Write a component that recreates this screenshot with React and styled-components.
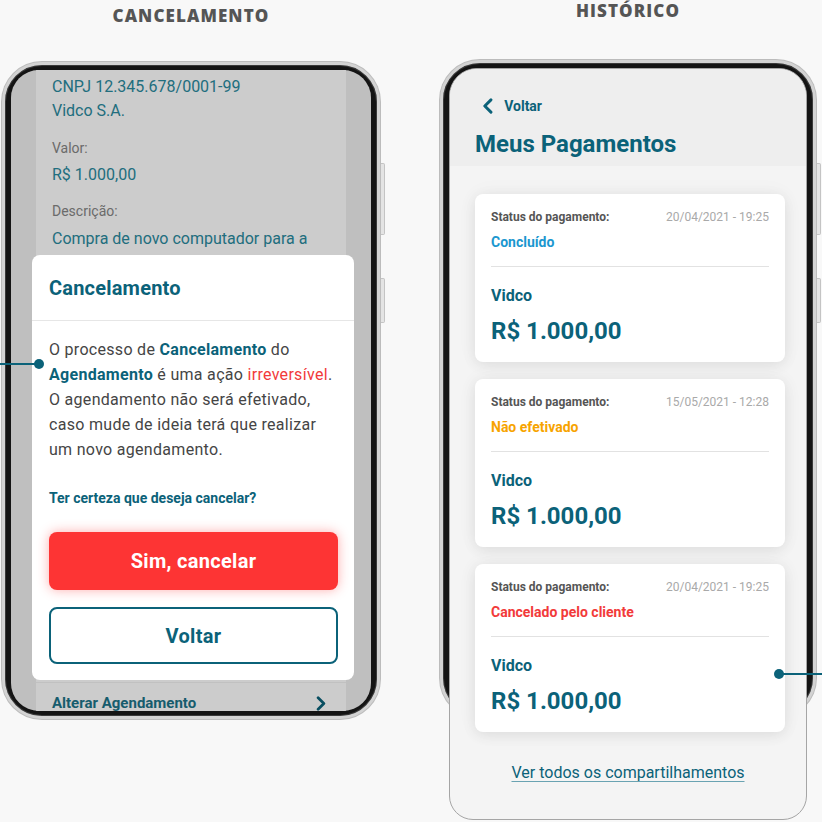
import React from 'react'
import styled, { createGlobalStyle } from 'styled-components'

const teal = '#0b6279'

const GlobalStyle = createGlobalStyle`
  body {
    margin: 0;
    background: #f8f8f8;
    font-family: Roboto, "Liberation Sans", sans-serif;
  }
`

const Page = styled.div`
  position: relative;
  width: 822px;
  height: 822px;
  overflow: hidden;
  box-sizing: border-box;
  padding-left: 2px;
  display: grid;
  grid-template-columns: 378px 376px;
  column-gap: 60px;
  align-items: start;
`
const Column = styled.div`
  display: flex;
  flex-direction: column;
  align-items: center;
`
const SectionTitle = styled.div`
  margin-top: ${p => p.top}px;
  margin-bottom: ${p => p.gap}px;
  font-family: "Open Sans", "DejaVu Sans", sans-serif;
  font-weight: 800;
  font-size: 17px;
  line-height: 22px;
  letter-spacing: 1.1px;
  color: #555;
`
const Frame = styled.div`
  position: relative;
  box-sizing: border-box;
  width: ${p => p.w}px;
  height: ${p => p.h}px;
  padding: 5px 6px;
  border: 3px solid #d3d3d3;
  border-radius: 40px;
  background: #141414;
  box-shadow: 0 0 0 1px #bcbcbc, inset 0 0 0 1px #3a3a3a;
  &::before, &::after {
    content: '';
    position: absolute;
    right: -8px;
    width: 3px;
    background: #e4e4e4;
    border: 1px solid #c4c4c4;
    border-left: none;
    border-radius: 0 2px 2px 0;
  }
  &::before { top: ${p => p.btnTop}px; height: 70px; }
  &::after { top: ${p => p.btnTop + 115}px; height: 43px; }
`
const Screen = styled.div`
  position: relative;
  box-sizing: border-box;
  height: ${p => p.h}px;
  border-radius: ${p => p.extended ? '28px 28px 24px 24px' : '28px'};
  border: ${p => p.extended ? '1px solid #a5a5a5' : 'none'};
  overflow: hidden;
  background: ${p => p.bg};
  display: flex;
  flex-direction: column;
`

/* ---------- left: cancel modal ---------- */

const DetailCard = styled.div`
  width: 310px;
  height: 653px;
  flex-shrink: 0;
  margin: 0 auto;
  box-sizing: border-box;
  padding: 5px 0 0;
  background: #fff;
  display: flex;
  flex-direction: column;
`
const DetailValue = styled.div`
  padding: 0 16px;
  margin-top: ${p => p.mt || 0}px;
  font-size: 16px;
  line-height: 24px;
  color: #2a8a9e;
`
const DetailLabel = styled.div`
  padding: 0 16px;
  margin-top: ${p => p.mt}px;
  font-size: 14px;
  line-height: 20px;
  color: #868686;
`
const ActionRow = styled.div`
  margin-top: auto;
  height: 40px;
  padding: 0 20px 0 16px;
  border-top: 1px solid #f2f2f2;
  display: flex;
  align-items: center;
  justify-content: space-between;
  font-size: 15px;
  font-weight: 700;
  color: #1c7489;
`
const Dim = styled.div`
  position: absolute;
  inset: 0;
  background: rgba(0, 0, 0, 0.2);
`
const Modal = styled.div`
  position: absolute;
  top: 185px;
  left: 21px;
  width: 322px;
  background: #fff;
  border-radius: 8px;
  padding-bottom: 16px;
`
const ModalHeader = styled.div`
  height: 65px;
  padding: 0 17px;
  display: flex;
  align-items: center;
  border-bottom: 1px solid #e6e6e6;
  font-size: 20px;
  font-weight: 700;
  letter-spacing: 0.2px;
  color: ${teal};
`
const ModalBody = styled.div`
  padding: 16px 16px 0 17px;
`
const Paragraph = styled.p`
  margin: 0;
  font-size: 16px;
  line-height: 25px;
  letter-spacing: 0.3px;
  white-space: nowrap;
  color: #454545;
`
const Strong = styled.b`
  color: ${teal};
  font-weight: 700;
`
const Danger = styled.span`
  color: #f23a3a;
`
const Question = styled.div`
  margin-top: 26px;
  font-size: 14px;
  line-height: 20px;
  font-weight: 700;
  color: ${teal};
`
const Button = styled.button`
  display: block;
  box-sizing: border-box;
  width: 289px;
  height: ${p => p.primary ? 58 : 57}px;
  margin-top: ${p => p.primary ? 24 : 17}px;
  border-radius: 8px;
  border: ${p => p.primary ? 'none' : `2px solid ${teal}`};
  background: ${p => p.primary ? '#fd3434' : '#fff'};
  box-shadow: ${p => p.primary ? '0 0 12px rgba(253, 52, 52, 0.4)' : 'none'};
  color: ${p => p.primary ? '#fff' : teal};
  font-family: Roboto, "Liberation Sans", sans-serif;
  font-size: 20px;
  font-weight: 700;
  letter-spacing: 0.3px;
`

/* ---------- right: history ---------- */

const Header = styled.div`
  height: 97px;
  flex-shrink: 0;
  box-sizing: border-box;
  padding: 27px 25px 0;
  background: #eeeeee;
`
const BackLink = styled.div`
  height: 20px;
  display: flex;
  align-items: center;
  gap: 11px;
  padding-left: 7px;
  font-size: 14px;
  font-weight: 700;
  color: ${teal};
`
const PageTitle = styled.div`
  margin-top: 13px;
  font-size: 24px;
  line-height: 30px;
  font-weight: 700;
  color: ${teal};
`
const List = styled.div`
  padding: 28px 0 0 25px;
  display: flex;
  flex-direction: column;
  gap: 17px;
`
const Card = styled.div`
  width: 310px;
  height: 168px;
  box-sizing: border-box;
  padding: 14px 16px 0;
  background: #fff;
  border-radius: 8px;
  box-shadow: 0 3px 14px rgba(0, 0, 0, 0.08), 0 0 22px rgba(0, 0, 0, 0.04);
`
const CardTop = styled.div`
  display: flex;
  justify-content: space-between;
  font-size: 12px;
  line-height: 18px;
`
const CardLabel = styled.span`
  font-weight: 700;
  color: #555;
`
const CardDate = styled.span`
  color: #a9a9a9;
`
const Status = styled.div`
  margin-top: 6px;
  font-size: 14px;
  line-height: 20px;
  font-weight: 700;
  color: ${p => p.color};
  padding-bottom: 14px;
  border-bottom: 1px solid #e2e2e2;
`
const Payee = styled.div`
  margin-top: 18px;
  font-size: 16px;
  line-height: 22px;
  font-weight: 700;
  color: ${teal};
`
const Amount = styled.div`
  margin-top: 8px;
  font-size: 24px;
  line-height: 32px;
  font-weight: 700;
  color: ${teal};
`
const SeeAll = styled.a`
  display: block;
  margin-top: 31px;
  text-align: center;
  font-size: 16px;
  line-height: 20px;
  color: ${teal};
  text-decoration: underline;
  text-decoration-color: #6aa3b2;
  text-underline-offset: 3px;
`

/* ---------- annotation pins ---------- */

const Pin = styled.div`
  position: absolute;
  top: ${p => p.y - 1}px;
  left: ${p => p.x1}px;
  width: ${p => p.x2 - p.x1}px;
  height: 2px;
  background: ${teal};
  &::after {
    content: '';
    position: absolute;
    top: -4px;
    ${p => p.dotLeft ? 'left: -5px;' : 'right: -5px;'}
    width: 10px;
    height: 10px;
    border-radius: 50%;
    background: ${teal};
  }
`

const Chevron = ({ dir = 'left', size = 14 }) => (
  <svg width={size * 0.7} height={size} viewBox="0 0 10 14" fill="none">
    <polyline
      points={dir === 'left' ? '8,1.5 2.5,7 8,12.5' : '2,1.5 7.5,7 2,12.5'}
      stroke={teal}
      strokeWidth="2.6"
      strokeLinecap="round"
      strokeLinejoin="round"
    />
  </svg>
)

const payments = [
  { date: '20/04/2021 - 19:25', status: 'Concluído', color: '#1b97cf' },
  { date: '15/05/2021 - 12:28', status: 'Não efetivado', color: '#f7a400' },
  { date: '20/04/2021 - 19:25', status: 'Cancelado pelo cliente', color: '#f23a3a' },
]

const App = () => {
  return (
    <Page>
      <GlobalStyle />
      <Column>
        <SectionTitle top={5} gap={35}>CANCELAMENTO</SectionTitle>
        <Frame w={378} h={657} btnTop={98}>
          <Screen h={641} bg="#efefef">
            <DetailCard>
              <DetailValue>CNPJ 12.345.678/0001-99</DetailValue>
              <DetailValue>Vidco S.A.</DetailValue>
              <DetailLabel mt={15}>Valor:</DetailLabel>
              <DetailValue mt={5}>R$ 1.000,00</DetailValue>
              <DetailLabel mt={14}>Descrição:</DetailLabel>
              <DetailValue mt={6}>Compra de novo computador para a</DetailValue>
              <DetailValue>empresa.</DetailValue>
              <ActionRow>
                Alterar Agendamento
                <Chevron dir="right" size={15} />
              </ActionRow>
            </DetailCard>
            <Dim />
            <Modal>
              <ModalHeader>Cancelamento</ModalHeader>
              <ModalBody>
                <Paragraph>
                  O processo de <Strong>Cancelamento</Strong> do
                  <br />
                  <Strong>Agendamento</Strong> é uma ação <Danger>irreversível</Danger>.
                  <br />
                  O agendamento não será efetivado,
                  <br />
                  caso mude de ideia terá que realizar
                  <br />
                  um novo agendamento.
                </Paragraph>
                <Question>Ter certeza que deseja cancelar?</Question>
                <Button primary>Sim, cancelar</Button>
                <Button>Voltar</Button>
              </ModalBody>
            </Modal>
          </Screen>
        </Frame>
      </Column>

      <Column>
        <SectionTitle top={0} gap={38}>HISTÓRICO</SectionTitle>
        <Frame w={376} h={658} btnTop={100}>
          <Screen h={752} bg="#f4f4f4" extended>
            <Header>
              <BackLink>
                <Chevron dir="left" size={16} />
                Voltar
              </BackLink>
              <PageTitle>Meus Pagamentos</PageTitle>
            </Header>
            <List>
              {payments.map((p, i) => (
                <Card key={i}>
                  <CardTop>
                    <CardLabel>Status do pagamento:</CardLabel>
                    <CardDate>{p.date}</CardDate>
                  </CardTop>
                  <Status color={p.color}>{p.status}</Status>
                  <Payee>Vidco</Payee>
                  <Amount>R$ 1.000,00</Amount>
                </Card>
              ))}
            </List>
            <SeeAll>Ver todos os compartilhamentos</SeeAll>
          </Screen>
        </Frame>
      </Column>

      <Pin y={364} x1={0} x2={39} />
      <Pin y={674} x1={779} x2={822} dotLeft />
    </Page>
  )
}

export default App
